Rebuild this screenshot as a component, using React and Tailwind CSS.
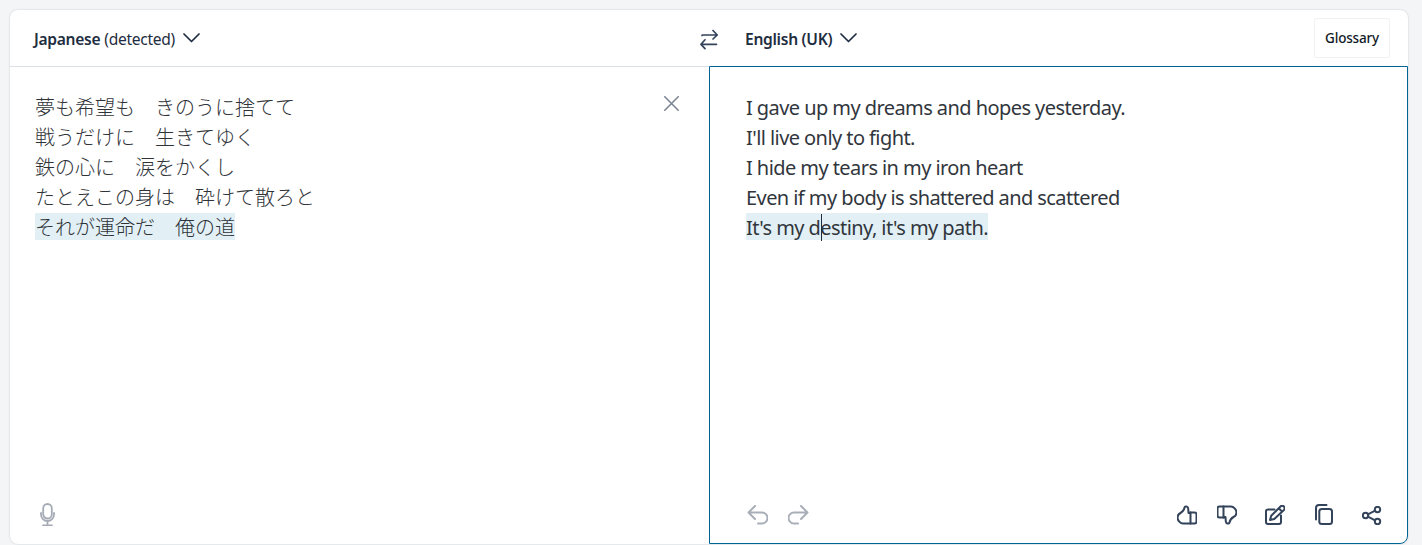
const sans = "font-['Noto_Sans','Noto_Sans_CJK_JP',sans-serif]";
const Chevron = () => (
  <svg width="17" height="10" viewBox="0 0 17 10" fill="none" stroke="#1e2d40" strokeWidth="1.7" strokeLinecap="round" strokeLinejoin="round"><path d="M1 1 8.500 8.500 16 1" /></svg>
);
const Ico = ({ w = 20, h = 20, sw = 2, className = "", children }) => (
  <svg width={w} height={h} viewBox={`0 0 ${w} ${h}`} fill="none" stroke="currentColor" strokeWidth={sw} strokeLinecap="round" strokeLinejoin="round" className={className}>{children}</svg>
);
const thumb = (
  <>
    <path d="M13 7.500h4.500a2 2 0 0 1 2 2v7a2 2 0 0 1-2 2H6c-2.500 0-5.500-3-5.500-6 0-2 1-3.500 3-4.500 2-1 3.500-3 4-5.500.3-1.500 3.500-1.500 3.700 1l.3 4.500h1.500Z" />
    <path d="M13.500 7.500v11" />
  </>
);
const ja = ["夢も希望も　きのうに捨てて", "戦うだけに　生きてゆく", "鉄の心に　涙をかくし", "たとえこの身は　砕けて散ろと"];
const en = ["I gave up my dreams and hopes yesterday.", "I'll live only to fight.", "I hide my tears in my iron heart", "Even if my body is shattered and scattered"];

export default function App() {
  return (
    <div className={`h-[545px] w-[1422px] overflow-hidden bg-[#f3f5f7] pt-[10px] pl-[10px] ${sans}`}>
      <div className="flex h-[534px] w-[1398px] flex-col rounded-[8px] bg-white shadow-[0_0_2px_rgba(30,45,64,0.22)]">
        <div className="flex h-[56px] shrink-0 items-center text-[15.600px] tracking-[-0.3px] text-[#1e2d40]">
          <div className="flex w-[690px] items-center pl-[24px] pt-[3px]">
            <span className="font-semibold">Japanese</span>
            <span className="ml-[4px]">(detected)</span>
            <span className="ml-[8px] -mt-[3px]"><Chevron /></span>
          </div>
          <Ico w={19} h={21} sw={1.7} className="mt-[2px] shrink-0 text-[#33435a]">
            <path d="M2 6.500c0-.4.300-.5.800-.5H17M13 1.500l4.200 4.500L13 10M16.500 15.300H1.200M5 10.800l-4 4.500 4 4.300" />
          </Ico>
          <div className="flex flex-1 items-center pl-[26px]">
            <span className="pt-[3px] font-semibold">English (UK)</span>
            <span className="ml-[8px] -mt-[1px]"><Chevron /></span>
            <button className="ml-auto mr-[18px] flex h-[40px] w-[76px] items-center justify-center rounded-[2px] border border-[#f0f1f3] bg-white text-[13.500px] font-medium tracking-[-0.2px] text-[#0f1a26]">Glossary</button>
          </div>
        </div>
        <div className="flex min-h-0 flex-1">
          <div className="relative flex w-[699px] flex-col justify-between border-t border-[#dae1e8]">
            <div className="pl-[25px] pt-[26px] text-[20px] leading-[30px] font-light text-[#2f3338]">
              {ja.map((t) => <div key={t} className="h-[30px]">{t}</div>)}
              <div className="h-[30px]"><span className="inline-block h-[27px] bg-[#e2f0f6] leading-[30px]">それが運命だ　俺の道</span></div>
            </div>
            <button className="absolute right-[30px] top-[29px] text-[#7d8694]">
              <Ico w={15} h={15} sw={1.6}><path d="M.800.800 14.200 14.200M14.200.800 .800 14.200" /></Ico>
            </button>
            <div className="pl-[30px] pb-[18px] text-[#a5abb5]">
              <Ico w={15} h={23} sw={1.8}>
                <rect x="3.200" y="1" width="8.600" height="14.500" rx="4.300" />
                <path d="M1 10v1.500a6.500 6.500 0 0 0 13 0V10M7.500 18v4M3 22.300h9" />
              </Ico>
            </div>
          </div>
          <div className="flex flex-1 flex-col justify-between rounded-br-[8px] border border-[#006494]">
            <div className="pl-[36px] pt-[26px] text-[20px] leading-[30px] tracking-[-0.57px] text-[#31363d]">
              {en.map((t) => <div key={t} className="h-[30px]">{t}</div>)}
              <div className="relative h-[30px]">
                <span className="inline-block h-[27px] bg-[#e2f0f6] leading-[30px]">It's my destiny, it's my path.</span>
                <span className="absolute left-[75px] top-[1px] h-[27px] w-px bg-[#1e2d40]" />
              </div>
            </div>
            <div className="flex items-end justify-between pr-[25px] pb-[18px] pl-[37px]">
              <div className="flex items-end gap-[20px] text-[#a9afb8]">
                <Ico w={21} h={20}><path d="M8 1 1.500 7.500 8 14M1.500 7.500H15a5 5 0 0 1 0 11h-4" /></Ico>
                <Ico w={21} h={20}><path d="M13 1l6.500 6.500L13 14M19.500 7.500H6a5 5 0 0 0 0 11h4" /></Ico>
              </div>
              <div className="flex items-end text-[#33435a]">
                <Ico>{thumb}</Ico>
                <Ico className="ml-[20px]"><g transform="rotate(180 10 10)">{thumb}</g></Ico>
                <Ico className="ml-[28px]">
                  <path d="M9.500 4.500H3a2 2 0 0 0-2 2V17a2 2 0 0 0 2 2h11a2 2 0 0 0 2-2v-6.500" />
                  <path d="M5 15l1.200-4.200L15.500 1.500a2.400 2.400 0 0 1 3.400 3.400L9.300 14 5 15ZM14 3.500l2.700 2.700" />
                </Ico>
                <Ico w={18} h={21} className="ml-[30px]">
                  <rect x="4.300" y="5" width="12.700" height="15" rx="2.500" />
                  <path d="M1 15.500V4a3 3 0 0 1 3-3h7.500" />
                </Ico>
                <Ico h={19} className="ml-[29px]">
                  <circle cx="15.500" cy="3.500" r="2.700" />
                  <circle cx="3.500" cy="9.500" r="2.700" />
                  <circle cx="15.500" cy="15.500" r="2.700" />
                  <path d="M5.900 8.300 13.100 4.700M5.900 10.700l7.200 3.600" />
                </Ico>
              </div>
            </div>
          </div>
        </div>
      </div>
    </div>
  );
}
